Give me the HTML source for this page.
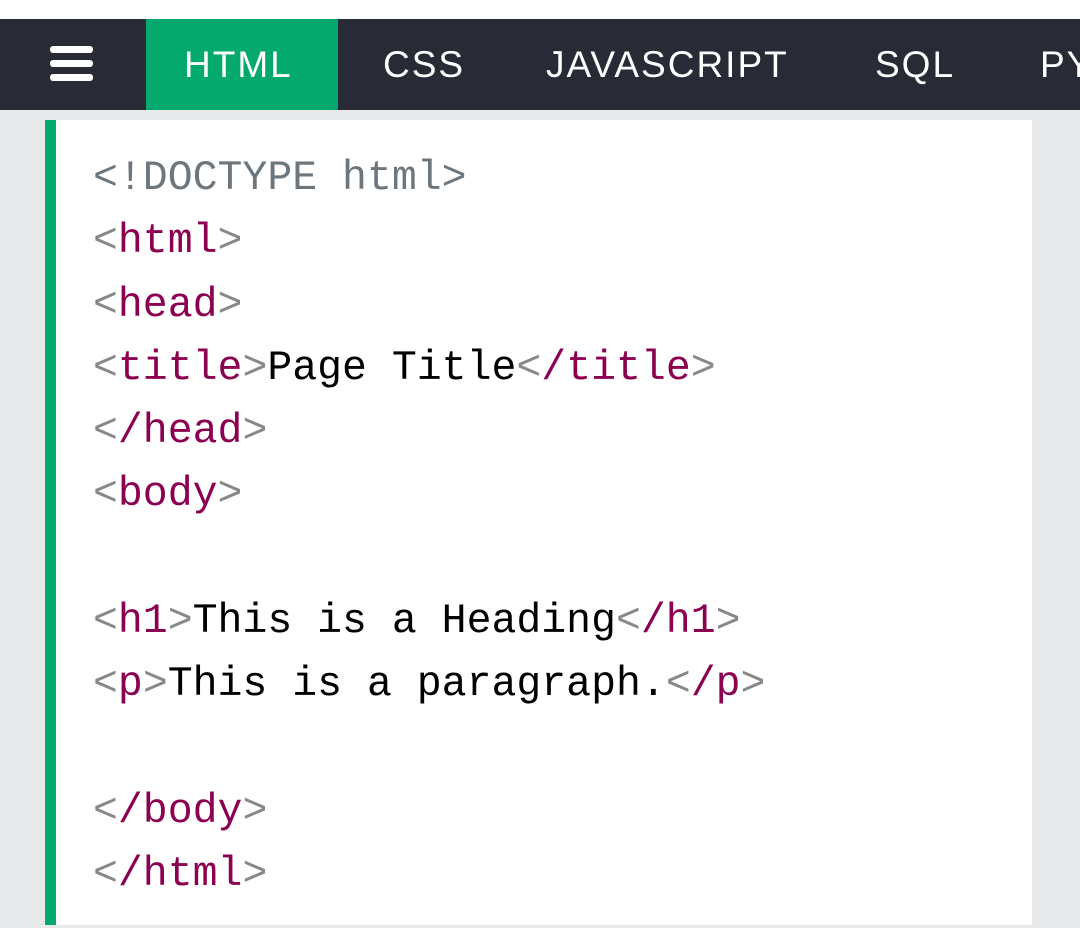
<!DOCTYPE html>
<html><head><style>
body{margin:0;width:1080px;height:928px;background:#e7e9eb;overflow:hidden;position:relative;font-family:"Liberation Sans",sans-serif}
.top{position:absolute;left:0;top:0;width:1080px;height:19px;background:#fff}
.nav{position:absolute;left:0;top:19px;width:1080px;height:91px;background:#282a35;color:#fff;white-space:nowrap;overflow:hidden}
.bar{position:absolute;left:50px;width:43px;height:7px;background:#fff;border-radius:3px}
.nav span{position:absolute;top:0;line-height:91px;font-size:37px;letter-spacing:2px}
.green{position:absolute;left:146px;top:0;width:192px;height:91px;background:#04aa6d}
.code{position:absolute;left:45px;top:120px;width:976px;height:805px;background:#fff;border-left:11px solid #04aa6d;overflow:hidden}
pre{margin:0;position:absolute;left:37px;top:27px;font-family:"Liberation Mono",monospace;font-size:41.5px;line-height:63.3px;color:#000}
.b{color:#888}.t{color:#8b0050}.d{color:#6e767d}
</style></head><body>
<div class="top"></div>
<div class="nav">
<div class="bar" style="top:27px"></div><div class="bar" style="top:41px"></div><div class="bar" style="top:55px"></div>
<div class="green"></div>
<span style="left:184px">HTML</span>
<span style="left:383px">CSS</span>
<span style="left:546px">JAVASCRIPT</span>
<span style="left:875px">SQL</span>
<span style="left:1040px">PYTHON</span>
</div>
<div class="code"><pre><span class="d">&lt;!DOCTYPE html&gt;</span>
<span class="b">&lt;</span><span class="t">html</span><span class="b">&gt;</span>
<span class="b">&lt;</span><span class="t">head</span><span class="b">&gt;</span>
<span class="b">&lt;</span><span class="t">title</span><span class="b">&gt;</span>Page Title<span class="b">&lt;</span><span class="t">/title</span><span class="b">&gt;</span>
<span class="b">&lt;</span><span class="t">/head</span><span class="b">&gt;</span>
<span class="b">&lt;</span><span class="t">body</span><span class="b">&gt;</span>

<span class="b">&lt;</span><span class="t">h1</span><span class="b">&gt;</span>This is a Heading<span class="b">&lt;</span><span class="t">/h1</span><span class="b">&gt;</span>
<span class="b">&lt;</span><span class="t">p</span><span class="b">&gt;</span>This is a paragraph.<span class="b">&lt;</span><span class="t">/p</span><span class="b">&gt;</span>

<span class="b">&lt;</span><span class="t">/body</span><span class="b">&gt;</span>
<span class="b">&lt;</span><span class="t">/html</span><span class="b">&gt;</span></pre></div>
</body></html>
